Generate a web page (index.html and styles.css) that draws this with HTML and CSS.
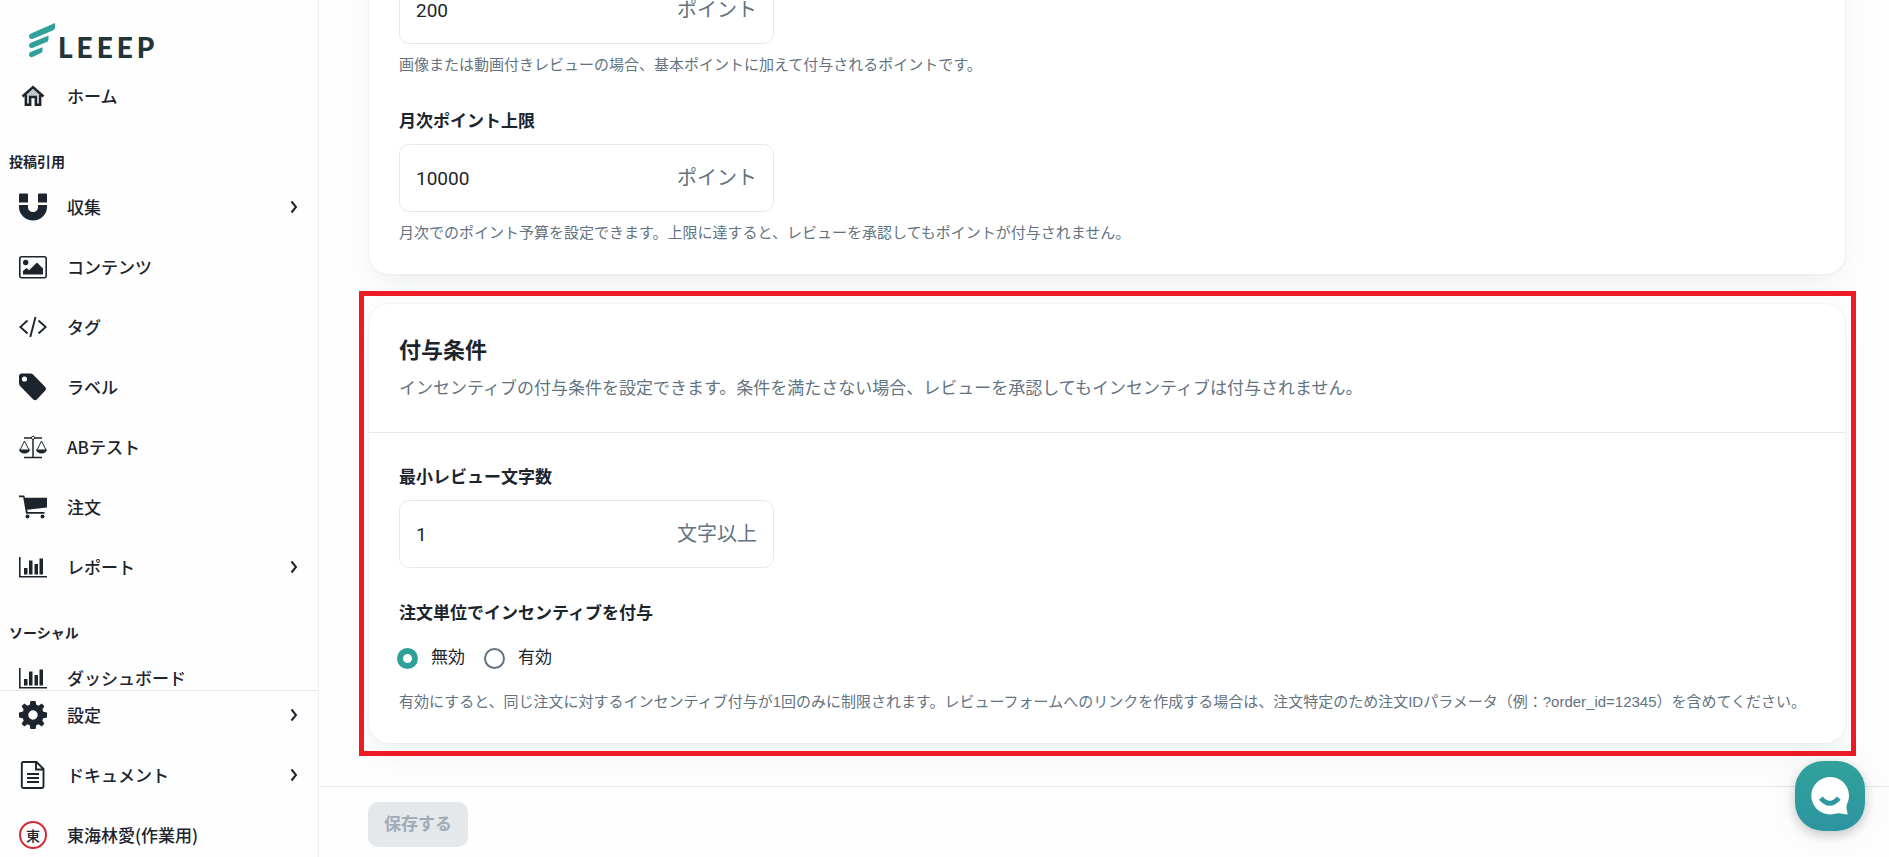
FILE: index.html
```html
<!DOCTYPE html>
<html lang="ja">
<head>
    <meta charset="UTF-8">
    <meta name="viewport" content="width=device-width, initial-scale=1.0">
    <title>LEEEP</title>
    <link rel="stylesheet" href="styles.css">
</head>
<body>
    <div class="layout">
        <aside class="sidebar">
            <nav class="nav-scroll">
                <a class="logo" href="#">
                    <svg class="logo-mark" viewBox="0 0 27 36" width="27" height="36" fill="#2fa19a">
                        <path d="M26 0V5Q25.500 6.800 23.800 7.600L4 15.800C1.800 16.600 0 15.600 0 13.600C0 12.200.800 11.100 2 10.600Z"/>
                        <path d="M19.500 12.500V17Q19 18.300 17.500 19L4 24.800C1.800 25.600 0 24.600 0 22.600C0 21.200.800 20.200 2 19.700Z"/>
                        <path d="M13.500 24.300V28.300Q13 29.600 11.500 30.300L4 33.800C1.800 34.700 0 33.700 0 31.700C0 30.300.800 29.300 2 28.800Z"/>
                    </svg>
                    <span class="logo-text">LEEEP</span>
                </a>
                <a class="nav-item" href="#">
                    <svg class="icon" viewBox="0 0 28 28"><path d="M6 13 14 5.500 22 13V23H17V15H11V23H6Z" fill="#c3c7ca"/><path d="M3.500 14.500 14 5 24.500 14.500M6.800 13V22.800H11.200V15H16.800V22.800H21.200V13" fill="none" stroke="#1c252e" stroke-width="2.400"/></svg>
                    <span>ホーム</span>
                </a>

                <p class="nav-title">投稿引用</p>
                <a class="nav-item" href="#">
                    <svg class="icon" viewBox="0 0 28 28"><path d="M1 .500H8Q9 .500 9 1.500V9.500H0V1.500Q0 .500 1 .500ZM20 .500H27Q28 .500 28 1.500V9.500H19V1.500Q19 .500 20 .500ZM0 12H9V14.500A5 4.500 0 0 0 19 14.500V12H28V14A14 13.500 0 0 1 0 14Z"/></svg>
                    <span>収集</span>
                    <svg class="chevron" viewBox="0 0 8 14"><path d="M1.500 1.500 6 7 1.500 12.500"/></svg>
                </a>
                <a class="nav-item" href="#">
                    <svg class="icon" viewBox="0 0 28 28"><rect x=".800" y="3.800" width="26.400" height="20.900" rx="2" fill="none" stroke="#1c252e" stroke-width="1.600"/><circle cx="6.700" cy="9.500" r="2.700"/><path d="M4 21.500V18L7.500 15 10 17.200 18 9.500 24 15.500V21.500Z"/></svg>
                    <span>コンテンツ</span>
                </a>
                <a class="nav-item" href="#">
                    <svg class="icon" viewBox="0 0 28 28"><path d="M8.500 7.500 1.300 14 8.500 20.500M19.500 7.500 26.700 14 19.500 20.500M16.500 4 11.300 24" fill="none" stroke="#1c252e" stroke-width="1.900"/></svg>
                    <span>タグ</span>
                </a>
                <a class="nav-item" href="#">
                    <svg class="icon" viewBox="0 0 28 28"><path fill-rule="evenodd" d="M3 .500H11.500Q13 .500 14 1.500L26.300 14Q27.800 15.800 26.300 17.500L17.800 26.500Q16 28 14.300 26.500L1.500 13.500Q0 12 0 10.300V3.500Q0 .500 3 .500ZM5.500 3.400A2.600 2.600 0 1 0 5.500 8.600A2.600 2.600 0 1 0 5.500 3.400Z"/></svg>
                    <span>ラベル</span>
                </a>
                <a class="nav-item" href="#">
                    <svg class="icon" viewBox="0 0 28 28"><path d="M5 5H23M14 5V24.500M5 24.500H23" fill="none" stroke="#1c252e" stroke-width="1.500"/><path d="M1 17 5.500 8 10 17M18 17 22.500 8 27 17" fill="none" stroke="#1c252e"/><path d="M0 16.500H11A5.500 4 0 0 1 0 16.500ZM17 16.500H28A5.500 4 0 0 1 17 16.500Z"/><circle cx="14" cy="4.800" r="1.600" fill="#fff" stroke="#1c252e"/></svg>
                    <span>ABテスト</span>
                </a>
                <a class="nav-item" href="#">
                    <svg class="icon" viewBox="0 0 28 28"><path d="M0 2.500H5.200L6 4.700H28V14.500L8.300 16.800 8.600 19H25.500V20.700H7L4.200 4.300H0Z"/><circle cx="8.500" cy="23.500" r="2"/><circle cx="23.500" cy="23.500" r="2"/></svg>
                    <span>注文</span>
                </a>
                <a class="nav-item" href="#">
                    <svg class="icon" viewBox="0 0 28 28"><path d="M0 4H1.600V23H28V24.500H0ZM5 15H8.500V21.500H5ZM10 7.500H13.500V21.500H10ZM15.500 11H19V21.500H15.500ZM20.500 5.500H24V21.500H20.500Z"/></svg>
                    <span>レポート</span>
                    <svg class="chevron" viewBox="0 0 8 14"><path d="M1.500 1.500 6 7 1.500 12.500"/></svg>
                </a>

                <p class="nav-title">ソーシャル</p>
                <a class="nav-item" href="#">
                    <svg class="icon" viewBox="0 0 28 28"><path d="M0 4H1.600V23H28V24.500H0ZM5 15H8.500V21.500H5ZM10 7.500H13.500V21.500H10ZM15.500 11H19V21.500H15.500ZM20.500 5.500H24V21.500H20.500Z"/></svg>
                    <span>ダッシュボード</span>
                </a>
            </nav>

            <nav class="nav-bottom">
                <a class="nav-item" href="#">
                    <svg class="icon" viewBox="0 0 28 28"><path fill-rule="evenodd" d="M11.500 0H16.500L17.300 3.700 19.600 4.700 22.700 2.600 25.400 5.300 23.300 8.400 24.300 10.700 28 11.500V16.500L24.300 17.300 23.300 19.600 25.400 22.700 22.700 25.400 19.600 23.300 17.300 24.300 16.500 28H11.500L10.700 24.300 8.400 23.300 5.300 25.400 2.600 22.700 4.700 19.600 3.700 17.300 0 16.500V11.500L3.700 10.700 4.700 8.400 2.600 5.300 5.300 2.600 8.400 4.700 10.700 3.700ZM14 9.300A4.700 4.700 0 1 0 14 18.700A4.700 4.700 0 1 0 14 9.300Z"/></svg>
                    <span>設定</span>
                    <svg class="chevron" viewBox="0 0 8 14"><path d="M1.500 1.500 6 7 1.500 12.500"/></svg>
                </a>
                <a class="nav-item" href="#">
                    <svg class="icon" viewBox="0 0 28 28"><path d="M4.300 1H17.500L24.500 8V25.500Q24.500 27 23 27H4.300Q2.800 27 2.800 25.500V2.500Q2.800 1 4.300 1ZM17 1V8.500H24.500M8 13H20M8 17H20M8 21H20" fill="none" stroke="#1c252e" stroke-width="1.900"/></svg>
                    <span>ドキュメント</span>
                    <svg class="chevron" viewBox="0 0 8 14"><path d="M1.500 1.500 6 7 1.500 12.500"/></svg>
                </a>
                <a class="nav-item" href="#">
                    <span class="avatar">東</span>
                    <span>東海林愛(作業用)</span>
                </a>
            </nav>
        </aside>

        <main class="main">
            <form class="content" id="incentiveForm">
                <section class="card">
                    <div class="card-body">
                        <div class="field">
                            <div class="input-box">
                                <input type="text" id="mediaPoint" value="200" aria-labelledby="mediaPointHelp">
                                <span class="unit">ポイント</span>
                            </div>
                            <p class="help" id="mediaPointHelp">画像または動画付きレビューの場合、基本ポイントに加えて付与されるポイントです。</p>
                        </div>
                        <div class="field">
                            <label class="field-label" for="monthlyLimit">月次ポイント上限</label>
                            <div class="input-box">
                                <input type="text" id="monthlyLimit" value="10000">
                                <span class="unit">ポイント</span>
                            </div>
                            <p class="help">月次でのポイント予算を設定できます。上限に達すると、レビューを承認してもポイントが付与されません。</p>
                        </div>
                    </div>
                </section>

                <section class="card highlight">
                    <header class="card-header">
                        <h2>付与条件</h2>
                        <p>インセンティブの付与条件を設定できます。条件を満たさない場合、レビューを承認してもインセンティブは付与されません。</p>
                    </header>
                    <div class="card-body">
                        <div class="field">
                            <label class="field-label" for="minLength">最小レビュー文字数</label>
                            <div class="input-box">
                                <input type="text" id="minLength" value="1">
                                <span class="unit">文字以上</span>
                            </div>
                        </div>
                        <fieldset class="field">
                            <legend class="field-label">注文単位でインセンティブを付与</legend>
                            <div class="radio-group">
                                <label class="radio"><input type="radio" name="perOrder" value="off" checked>無効</label>
                                <label class="radio"><input type="radio" name="perOrder" value="on">有効</label>
                            </div>
                            <p class="help">有効にすると、同じ注文に対するインセンティブ付与が1回のみに制限されます。レビューフォームへのリンクを作成する場合は、注文特定のため注文IDパラメータ（例：?order_id=12345）を含めてください。</p>
                        </fieldset>
                    </div>
                </section>
            </form>

            <footer class="footer">
                <button class="save-btn" type="submit" form="incentiveForm" disabled>保存する</button>
            </footer>
        </main>
    </div>

    <button class="chat-btn" type="button" aria-label="チャット">
        <svg viewBox="0 0 38 38" width="38" height="38"><path d="M19 0A18.700 18.700 0 1 0 19 37.400C24 37.400 26 35.500 30 36.500L35.500 37.400Q37 37.400 36.500 35.800C35.500 32.500 35 30.500 36 27A18.700 18.700 0 0 0 19 0Z" fill="#fff"/><path d="M9.800 21.200Q18.800 31.500 27.800 21.200" fill="none" stroke="#2e9a9d" stroke-width="5"/></svg>
    </button>
</body>
</html>
```

FILE: styles.css
```css
* { box-sizing: border-box; }
body { margin: 0; font-family: "Liberation Sans", "Noto Sans CJK JP", sans-serif; font-size: 17px; line-height: 26px; color: #1c252e; background: #fefefe; }
h2, p { margin: 0; }
a { color: inherit; text-decoration: none; }

.layout { display: flex; height: 100vh; overflow: hidden; }

/* sidebar */
.sidebar { display: flex; flex-direction: column; flex: 0 0 319px; border-right: 1px solid #edeff2; font-family: "Noto Sans CJK JP", sans-serif; font-weight: 500; }
.nav-scroll { flex: 1; min-height: 0; overflow: hidden; }
.nav-bottom { display: flex; flex-direction: column; gap: 16px; padding-top: 2px; border-top: 1px solid #e6e9ec; }
.logo { display: flex; align-items: flex-end; gap: 2px; height: 74px; padding: 0 0 15px 29px; }
.logo-text { font-family: Lato, sans-serif; font-size: 28px; font-weight: 900; line-height: 24px; letter-spacing: 4px; color: #22353b; }
.nav-item { display: flex; align-items: center; height: 44px; padding: 0 20px 0 19px; }
.nav-item + .nav-item { margin-top: 16px; }
.nav-bottom .nav-item { margin-top: 0; }
.nav-title { margin: 33px 0 14px; padding-left: 9px; font-size: 14px; font-weight: 700; line-height: 20px; }
.icon { width: 28px; height: 28px; margin-right: 20px; fill: #1c252e; }
.chevron { width: 8px; height: 14px; margin-left: auto; fill: none; stroke: #1c252e; stroke-width: 2; }
.avatar { width: 28px; height: 28px; margin-right: 20px; border: 2px solid #d42a35; border-radius: 50%; font-size: 14px; line-height: 24px; text-align: center; }

/* main */
.main { display: flex; flex-direction: column; flex: 1; min-width: 0; }
.content { display: flex; flex-direction: column; justify-content: flex-end; gap: 30px; flex: 1; min-height: 0; padding: 0 44px 43px 50px; overflow: hidden; }
.card { border-radius: 20px; background: #fff; box-shadow: 0 0 3px rgba(145, 158, 171, 0.2), 0 15px 30px -5px rgba(145, 158, 171, 0.15); }
.card-header { padding: 30px; border-bottom: 1px solid #e6e9ec; }
.card-header h2 { margin-bottom: 8px; font-size: 22px; line-height: 34px; }
.card-header p { color: #637381; }
.card-body { display: flex; flex-direction: column; gap: 33px; padding: 32px 30px 30px; }

.highlight { position: relative; }
.highlight::after { content: ""; position: absolute; inset: -13px -11px -13px -10px; border: 5px solid #ed1c24; pointer-events: none; }

.field { margin: 0; padding: 0; border: 0; }
.field-label { display: block; margin-bottom: 9px; padding: 0; font-weight: 700; }
.input-box { display: flex; align-items: center; width: 375px; height: 68px; padding: 0 16px; border: 1px solid #e6e9ec; border-radius: 10px; font-size: 20px; }
.input-box input { flex: 1; min-width: 0; padding: 0; border: 0; outline: 0; font-family: Roboto, sans-serif; font-size: 19px; color: inherit; background: none; }
.unit { color: #637381; }
.help { margin-top: 10px; font-size: 15px; line-height: 22px; color: #637381; }

.radio-group { display: flex; gap: 19px; margin: 9px 0 0 -2px; }
.radio { display: flex; align-items: center; gap: 13px; }
.radio input { appearance: none; width: 21px; height: 21px; margin: 0; border: 2px solid #637381; border-radius: 50%; background: #fff; }
.radio input:checked { border: 6px solid #2fa19a; }
.radio-group + .help { margin-top: 20px; }

.footer { padding: 15px 49px 10px; border-top: 1px solid #e6e9ec; }
.save-btn { display: block; height: 45px; padding: 0 16px; border: 0; border-radius: 10px; font: inherit; font-weight: 700; color: #a0abb8; background: #e4e8eb; }

.chat-btn { position: fixed; right: 24px; bottom: 26px; display: flex; align-items: center; justify-content: center; width: 70px; height: 70px; padding: 0; border: 0; border-radius: 28px; background: linear-gradient(#30a29a, #2d94a1); box-shadow: 0 4px 12px rgba(0, 0, 0, 0.2), 0 4px 40px rgba(0, 0, 0, 0.06); }
```
